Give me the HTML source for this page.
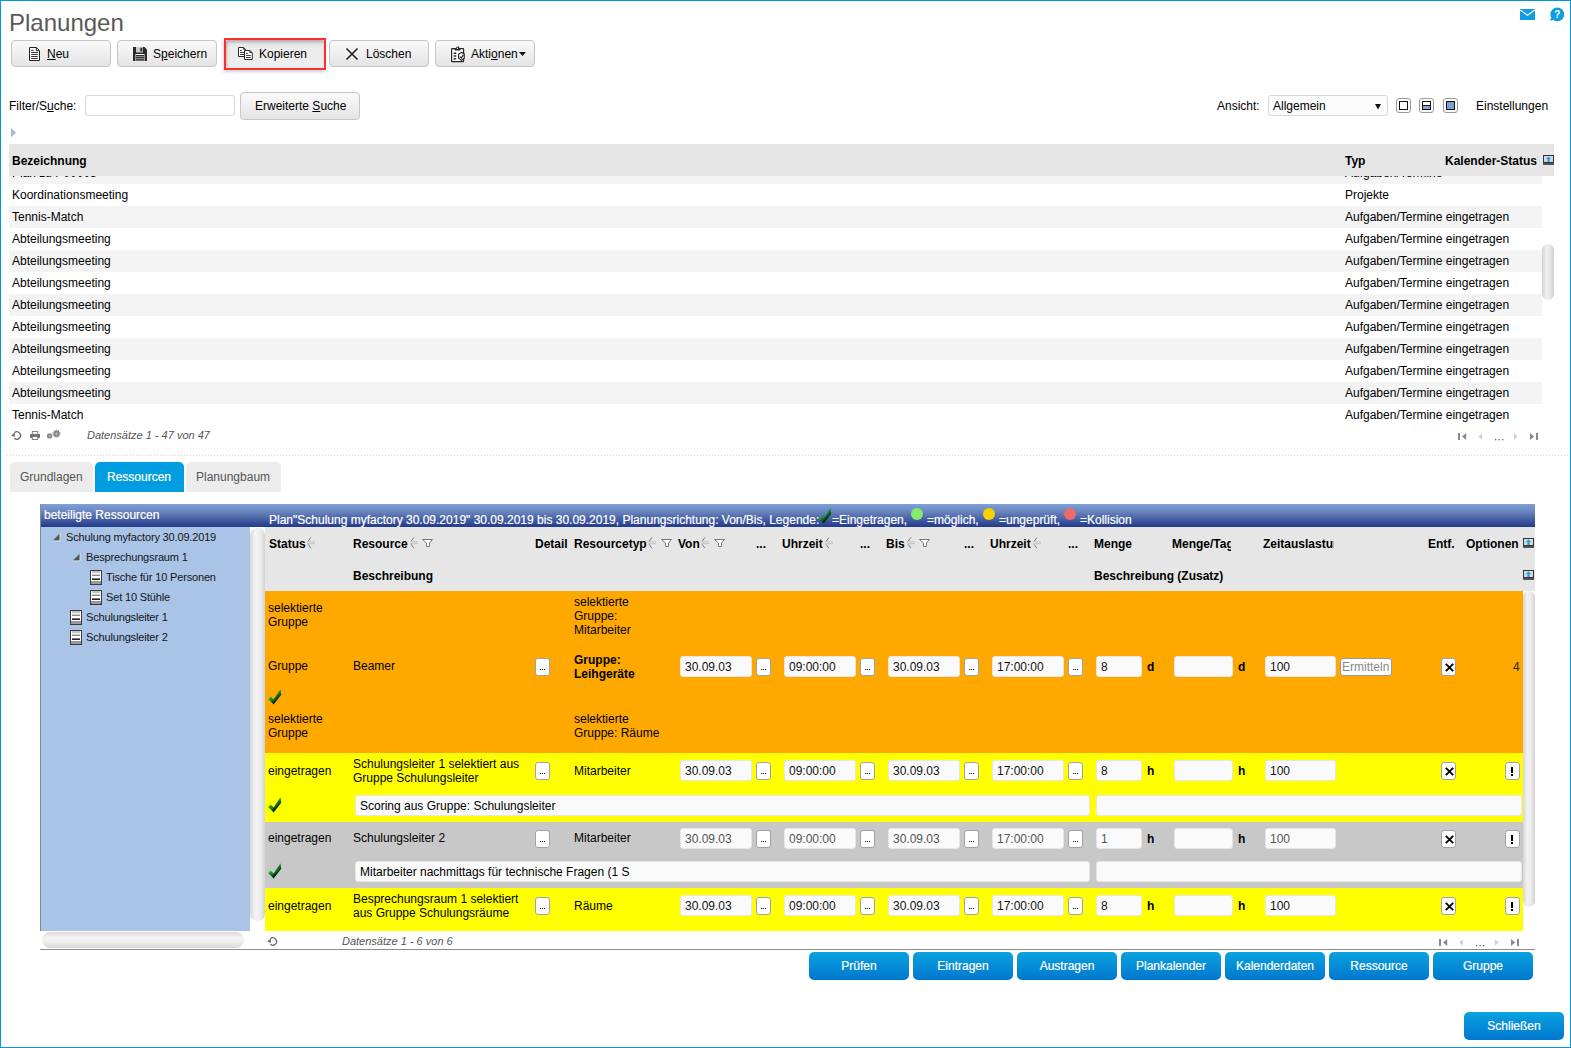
<!DOCTYPE html><html><head><meta charset="utf-8"><title>Planungen</title><style>
*{margin:0;padding:0;box-sizing:border-box}
html,body{width:1571px;height:1048px;overflow:hidden;background:#fff}
body{font-family:"Liberation Sans",sans-serif;color:#000;position:relative}
.t{position:absolute;white-space:nowrap}
.r{position:absolute}
.btn{border:1px solid #c6c6c6;border-radius:4px;background:linear-gradient(#fafafa,#e4e4e4)}
.inp{background:#fafafa;border:1px solid #e6e6e6;border-radius:3px}
.sbtn{background:#fff;border:1px solid #9ea3ab;border-radius:3px}
.bbtn{border-radius:5px;background:linear-gradient(#0aa2de,#0077d0)}
.w{-webkit-text-stroke:0.2px #fff}
.u{text-decoration:underline;text-decoration-thickness:1px;text-underline-offset:1px}
svg{position:absolute;overflow:visible}
</style></head><body><div class="r " style="left:0px;top:0px;width:1571px;height:1048px;border:1px solid #0398de"></div><div class="t " style="left:9px;top:9.98px;font-size:24px;line-height:26px;color:#595959;">Planungen</div><svg style="left:1520px;top:9px" width="15" height="11" viewBox="0 0 15 11"><rect x="0" y="0" width="15" height="11" fill="#0d9de0"/><path d="M0.3 1 L7.5 6.3 L14.7 1" stroke="#fff" stroke-width="1.1" fill="none"/></svg><svg style="left:1548px;top:7px" width="18" height="16" viewBox="0 0 18 16"><circle cx="9.3" cy="7.4" r="6.9" fill="#0d9de0"/><path d="M1.5 13.8 L4.5 9.5 L7 12.5 Z" fill="#0d9de0"/><text x="9.3" y="11.3" font-family="Liberation Sans" font-weight="bold" font-size="10" fill="#fff" text-anchor="middle">?</text></svg><div class="r btn" style="left:11px;top:40px;width:100px;height:27px;"></div><svg style="left:29px;top:47px" width="11" height="14" viewBox="0 0 11 14"><path d="M0.5 0.5H7.3L10.5 3.7V13.5H0.5Z" fill="#fff" stroke="#222" stroke-width="1"/><path d="M7.3 0.5V3.7H10.5" fill="none" stroke="#222" stroke-width="1"/><path d="M2.2 3.4H4.8M2.2 5.5H8.8M2.2 7.5H8.8M2.2 9.5H8.8M2.2 11.5H8.8" stroke="#222" stroke-width="0.9"/></svg><div class="t " style="left:47px;top:46.84px;font-size:12px;line-height:14px;"><span class="u">N</span>eu</div><div class="r btn" style="left:117px;top:40px;width:100px;height:27px;"></div><svg style="left:133px;top:47px" width="14" height="14" viewBox="0 0 14 14"><path d="M0 0H11.5L14 2.5V14H0Z" fill="#2a2a2a"/><rect x="3" y="0" width="7" height="5.5" fill="#cacaca"/><rect x="7.3" y="0.8" width="2" height="3.6" fill="#2a2a2a"/><rect x="2.5" y="7" width="9" height="7" fill="#fff"/><rect x="3" y="8" width="8" height="6" fill="#9a9a9a"/><path d="M3 8.6H11M3 10.7H11M3 12.9H11" stroke="#222" stroke-width="1"/></svg><div class="t " style="left:153px;top:46.84px;font-size:12px;line-height:14px;">S<span class="u">p</span>eichern</div><div class="r " style="left:224px;top:38px;width:102px;height:32px;border:2px solid #fb2f2f;box-shadow:-1px 2px 3px rgba(0,0,0,0.18)"></div><div class="r " style="left:226px;top:40px;width:98px;height:28px;background:linear-gradient(#dedede,#ececec 30%,#eeeeee);box-shadow:inset 1px 2px 3px rgba(0,0,0,0.22);border-radius:2px"></div><svg style="left:237px;top:46px" width="16" height="14" viewBox="0 0 16 14"><path d="M1.5 1.5H6.6L8.3 3.2V10.5H1.5Z" fill="#fff" stroke="#2a2a2a" stroke-width="1"/><path d="M6.6 1.5V3.3H8.3" fill="none" stroke="#2a2a2a"/><path d="M3 4.4H4.9M3 6.5H7.5M3 8.5H7.5" stroke="#2a2a2a" stroke-width="0.9"/><path d="M7.5 4.5H12.9L15.3 6.9V13.5H7.5Z" fill="#fff" stroke="#2a2a2a" stroke-width="1"/><path d="M12.9 4.5V6.5H15.3" fill="none" stroke="#2a2a2a"/><path d="M9 7.4H10.9M9 9.5H13.8M9 11.5H13.8" stroke="#2a2a2a" stroke-width="0.9"/></svg><div class="t " style="left:259px;top:46.84px;font-size:12px;line-height:14px;">Kopieren</div><div class="r btn" style="left:329px;top:40px;width:100px;height:27px;"></div><svg style="left:345px;top:47px" width="14" height="14" viewBox="0 0 14 14"><path d="M1.5 1.5L12.5 12.5M12.5 1.5L1.5 12.5" stroke="#222" stroke-width="1.6"/></svg><div class="t " style="left:366px;top:46.84px;font-size:12px;line-height:14px;">Löschen</div><div class="r btn" style="left:435px;top:40px;width:100px;height:27px;"></div><svg style="left:450px;top:45px" width="15" height="17" viewBox="0 0 15 17"><rect x="1.6" y="3.6" width="12" height="13" rx="0.6" fill="#fff" stroke="#262626" stroke-width="1.2"/><path d="M4.6 5.6H10.4V4H9.2V1.4H7.2L5.8 3V4H4.6Z" fill="#262626"/><rect x="6.8" y="2.6" width="1.3" height="1.2" fill="#fff"/><path d="M3.6 8.2H6.2M3.6 11H6.2M3.6 13.8H6.2" stroke="#262626" stroke-width="1.5"/><path d="M8.6 9.2L11.6 7.4L14.2 8.8V13.2L11.6 15.4L8.6 13.3Z" fill="#fff" stroke="#262626" stroke-width="1.1"/><path d="M9.9 11.6L11.3 13L13.4 9.6" fill="none" stroke="#262626" stroke-width="1.2"/></svg><div class="t " style="left:471px;top:46.84px;font-size:12px;line-height:14px;">Akti<span class="u">o</span>nen</div><svg style="left:519px;top:52px" width="8" height="5" viewBox="0 0 8 5"><path d="M0 0H7L3.5 4Z" fill="#111"/></svg><div class="t " style="left:9px;top:98.84px;font-size:12px;line-height:14px;">Filter/S<span class="u">u</span>che:</div><div class="r " style="left:85px;top:95px;width:150px;height:21px;background:#fff;border:1px solid #d9d9d9;border-radius:3px"></div><div class="r btn" style="left:240px;top:92px;width:120px;height:28px;"></div><div class="t " style="left:255px;top:98.84px;font-size:12px;line-height:14px;">Erweiterte <span class="u">S</span>uche</div><div class="t " style="left:1217px;top:98.84px;font-size:12px;line-height:14px;">Ansicht:</div><div class="r " style="left:1268px;top:95px;width:120px;height:21px;background:#fcfcfc;border:1px solid #d6d6d6;border-radius:3px"></div><div class="t " style="left:1273px;top:98.84px;font-size:12px;line-height:14px;">Allgemein</div><svg style="left:1375px;top:104px" width="7" height="6" viewBox="0 0 7 6"><path d="M0 0H6L3 5.5Z" fill="#111"/></svg><div class="r" style="left:1396px;top:98px;width:15px;height:15px;border:1px solid #9a9a9a;border-radius:3px;background:#fff"></div><div class="r " style="left:1399px;top:101px;width:9px;height:9px;border:1px solid #111;background:#fff"></div><div class="r" style="left:1419px;top:98px;width:15px;height:15px;border:1px solid #9a9a9a;border-radius:3px;background:#fff"></div><div class="r " style="left:1422px;top:101px;width:9px;height:9px;border:1px solid #111;background:linear-gradient(#fff 0,#fff 3px,#111 3px,#111 4px,#8aa3d6 4px)"></div><div class="r" style="left:1443px;top:98px;width:15px;height:15px;border:1px solid #9a9a9a;border-radius:3px;background:#fff"></div><div class="r " style="left:1446px;top:101px;width:9px;height:9px;border:1px solid #111;background:#7b9dd6"></div><div class="t " style="left:1476px;top:98.84px;font-size:12px;line-height:14px;">Einstellungen</div><svg style="left:11px;top:128px" width="6" height="10" viewBox="0 0 6 10"><path d="M0 0L5 4.8L0 9.6Z" fill="#a8bccb"/></svg><div class="r " style="left:9px;top:144px;width:1545px;height:32px;background:#e6e6e6"></div><div class="t " style="left:12px;top:153.84px;font-size:12px;line-height:14px;font-weight:bold;">Bezeichnung</div><div class="t " style="left:1345px;top:153.84px;font-size:12px;line-height:14px;font-weight:bold;">Typ</div><div class="t " style="left:1445px;top:153.84px;font-size:12px;line-height:14px;font-weight:bold;">Kalender-Status</div><svg style="left:1543px;top:155px" width="11" height="10" viewBox="0 0 11 10"><rect x="0" y="0" width="11" height="9" fill="#333"/><rect x="1" y="1" width="9" height="6" fill="#cfd8e0"/><path d="M5.5 1.5L8 4H6.5V7H4.5V4H3Z" fill="#1a9ae0"/><rect x="0" y="8" width="11" height="2" fill="#555"/></svg><div class="r" style="left:9px;top:176px;width:1533px;height:250px;overflow:hidden"><div class="r" style="left:0;top:-14px;width:1533px;height:22px;background:#f4f4f4"></div><div class="t " style="left:3px;top:-10.16px;font-size:12px;line-height:14px;">Plan zu P00003</div><div class="t " style="left:1336px;top:-10.16px;font-size:12px;line-height:14px;">Aufgaben/Termine</div><div class="t " style="left:3px;top:11.84px;font-size:12px;line-height:14px;">Koordinationsmeeting</div><div class="t " style="left:1336px;top:11.84px;font-size:12px;line-height:14px;">Projekte</div><div class="r" style="left:0;top:30px;width:1533px;height:22px;background:#f4f4f4"></div><div class="t " style="left:3px;top:33.84px;font-size:12px;line-height:14px;">Tennis-Match</div><div class="t " style="left:1336px;top:33.84px;font-size:12px;line-height:14px;">Aufgaben/Termine eingetragen</div><div class="t " style="left:3px;top:55.84px;font-size:12px;line-height:14px;">Abteilungsmeeting</div><div class="t " style="left:1336px;top:55.84px;font-size:12px;line-height:14px;">Aufgaben/Termine eingetragen</div><div class="r" style="left:0;top:74px;width:1533px;height:22px;background:#f4f4f4"></div><div class="t " style="left:3px;top:77.84px;font-size:12px;line-height:14px;">Abteilungsmeeting</div><div class="t " style="left:1336px;top:77.84px;font-size:12px;line-height:14px;">Aufgaben/Termine eingetragen</div><div class="t " style="left:3px;top:99.84px;font-size:12px;line-height:14px;">Abteilungsmeeting</div><div class="t " style="left:1336px;top:99.84px;font-size:12px;line-height:14px;">Aufgaben/Termine eingetragen</div><div class="r" style="left:0;top:118px;width:1533px;height:22px;background:#f4f4f4"></div><div class="t " style="left:3px;top:121.84px;font-size:12px;line-height:14px;">Abteilungsmeeting</div><div class="t " style="left:1336px;top:121.84px;font-size:12px;line-height:14px;">Aufgaben/Termine eingetragen</div><div class="t " style="left:3px;top:143.84px;font-size:12px;line-height:14px;">Abteilungsmeeting</div><div class="t " style="left:1336px;top:143.84px;font-size:12px;line-height:14px;">Aufgaben/Termine eingetragen</div><div class="r" style="left:0;top:162px;width:1533px;height:22px;background:#f4f4f4"></div><div class="t " style="left:3px;top:165.84px;font-size:12px;line-height:14px;">Abteilungsmeeting</div><div class="t " style="left:1336px;top:165.84px;font-size:12px;line-height:14px;">Aufgaben/Termine eingetragen</div><div class="t " style="left:3px;top:187.84px;font-size:12px;line-height:14px;">Abteilungsmeeting</div><div class="t " style="left:1336px;top:187.84px;font-size:12px;line-height:14px;">Aufgaben/Termine eingetragen</div><div class="r" style="left:0;top:206px;width:1533px;height:22px;background:#f4f4f4"></div><div class="t " style="left:3px;top:209.84px;font-size:12px;line-height:14px;">Abteilungsmeeting</div><div class="t " style="left:1336px;top:209.84px;font-size:12px;line-height:14px;">Aufgaben/Termine eingetragen</div><div class="t " style="left:3px;top:231.84px;font-size:12px;line-height:14px;">Tennis-Match</div><div class="t " style="left:1336px;top:231.84px;font-size:12px;line-height:14px;">Aufgaben/Termine eingetragen</div></div><div class="r " style="left:1542px;top:244px;width:12px;height:56px;border-radius:6px;background:linear-gradient(90deg,#d2d2d2,#efefef 35%,#e9e9e9 65%,#cfcfcf)"></div><svg style="left:10px;top:430px" width="12" height="11" viewBox="0 0 12 11"><path d="M4.4 8.3A3.7 3.7 0 1 0 4.4 2.7" stroke="#6a6a6a" stroke-width="1.3" fill="none"/><path d="M1.2 5.4L4.8 2.4V7Z" fill="#6a6a6a"/></svg><svg style="left:30px;top:431px" width="10" height="9" viewBox="0 0 10 9"><rect x="0" y="3" width="10" height="4" rx="0.8" fill="#6e6e6e"/><rect x="2.3" y="0.5" width="5.4" height="2.8" fill="#fff" stroke="#7a7a7a" stroke-width="0.9"/><rect x="2.3" y="5.6" width="5.4" height="2.9" fill="#fff" stroke="#7a7a7a" stroke-width="0.9"/></svg><svg style="left:46px;top:429px" width="15" height="11" viewBox="0 0 15 11"><circle cx="3.6" cy="6.9" r="2.7" fill="#8a8a8a"/><circle cx="3.6" cy="6.9" r="1" fill="#b0b0b0"/><circle cx="10.5" cy="4.7" r="3.1" fill="#858585"/><circle cx="10.5" cy="4.7" r="3.5" fill="none" stroke="#858585" stroke-width="1.1" stroke-dasharray="1 1.2"/><circle cx="10.5" cy="4.7" r="1.2" fill="#b8b8b8"/></svg><div class="t " style="left:87px;top:428.89px;font-size:11px;line-height:13px;font-style:italic;color:#555;">Datensätze 1 - 47 von 47</div><svg style="left:1458px;top:433px" width="82" height="8" viewBox="0 0 82 8"><rect x="0" y="0" width="2" height="7" fill="#8a8a8a"/><path d="M8.2 0V7L4 3.5Z" fill="#8a8a8a"/><path d="M24 0.3V6.7L20.4 3.5Z" fill="#d0d0d0"/><rect x="37" y="6" width="1.3" height="1.3" fill="#666"/><rect x="40.5" y="6" width="1.3" height="1.3" fill="#666"/><rect x="44" y="6" width="1.3" height="1.3" fill="#666"/><path d="M56 0.3V6.7L59.6 3.5Z" fill="#d0d0d0"/><path d="M72 0V7L76.2 3.5Z" fill="#8a8a8a"/><rect x="78" y="0" width="2" height="7" fill="#8a8a8a"/></svg><div class="r " style="left:7px;top:455px;width:1562px;height:1px;background:repeating-linear-gradient(90deg,#d2d2d2 0,#d2d2d2 1px,transparent 1px,transparent 3px)"></div><div class="r " style="left:10px;top:462px;width:83px;height:30px;background:#ececec;border-radius:5px 5px 0 0"></div><div class="t " style="left:20px;top:469.84px;font-size:12px;line-height:14px;color:#555;">Grundlagen</div><div class="r " style="left:95px;top:462px;width:89px;height:30px;background:#009ee0;border-radius:5px 5px 0 0"></div><div class="t w" style="left:107px;top:469.84px;font-size:12px;line-height:14px;color:#fff;">Ressourcen</div><div class="r " style="left:186px;top:462px;width:95px;height:30px;background:#ececec;border-radius:5px 5px 0 0"></div><div class="t " style="left:196px;top:469.84px;font-size:12px;line-height:14px;color:#555;">Planungbaum</div><div class="r " style="left:40px;top:504px;width:1495px;height:23px;background:linear-gradient(#7ea1d8,#6d88c2 30%,#4c64a6 62%,#2a4290 92%,#233b8a)"></div><div class="t w" style="left:44px;top:507.84px;font-size:12px;line-height:14px;color:#fff;">beteiligte Ressourcen</div><div class="t w" style="left:269px;top:513.14px;font-size:12px;line-height:14px;color:#fff;">Plan"Schulung myfactory 30.09.2019" 30.09.2019 bis 30.09.2019, Planungsrichtung: Von/Bis, Legende:</div><svg style="left:818px;top:508px" width="14" height="16" viewBox="0 0 14 16"><defs><linearGradient id="cg818_508" x1="0.25" y1="0.2" x2="0.75" y2="0.8"><stop offset="0" stop-color="#a8eea0"/><stop offset="0.3" stop-color="#22a52e"/><stop offset="0.62" stop-color="#0b6a18"/><stop offset="0.85" stop-color="#021a05"/><stop offset="1" stop-color="#000"/></linearGradient></defs><path d="M0.1 9.9L2.6 7.4L5.6 10.6L12.5 0.3L13.2 5.8L5.6 15.6Z" fill="url(#cg818_508)"/></svg><div class="t w" style="left:832px;top:513.14px;font-size:12px;line-height:14px;color:#fff;">=Eingetragen,</div><svg style="left:911px;top:508px" width="12" height="12" viewBox="0 0 12 12"><circle cx="6" cy="6" r="6" fill="#84ec6c"/></svg><div class="t w" style="left:927px;top:513.14px;font-size:12px;line-height:14px;color:#fff;">=möglich,</div><svg style="left:983px;top:508px" width="12" height="12" viewBox="0 0 12 12"><circle cx="6" cy="6" r="6" fill="#f8d200"/></svg><div class="t w" style="left:999px;top:513.14px;font-size:12px;line-height:14px;color:#fff;">=ungeprüft,</div><svg style="left:1064px;top:508px" width="12" height="12" viewBox="0 0 12 12"><circle cx="6" cy="6" r="6" fill="#ec6a6a"/></svg><div class="t w" style="left:1080px;top:513.14px;font-size:12px;line-height:14px;color:#fff;">=Kollision</div><div class="r " style="left:40px;top:527px;width:210px;height:404px;background:#a9c4e6"></div><div class="r " style="left:40px;top:504px;width:1px;height:446px;background:#8a8a8a"></div><svg style="left:52px;top:533px" width="9" height="9" viewBox="0 0 9 9"><path d="M8.3 0.3V8.3H0.3Z" fill="#fff"/><path d="M7.6 0.8V7.6H0.8Z" fill="#555"/></svg><div class="t " style="left:66px;top:530.69px;font-size:11px;line-height:13px;color:#151515;letter-spacing:-0.16px">Schulung myfactory 30.09.2019</div><svg style="left:72px;top:553px" width="9" height="9" viewBox="0 0 9 9"><path d="M8.3 0.3V8.3H0.3Z" fill="#fff"/><path d="M7.6 0.8V7.6H0.8Z" fill="#555"/></svg><div class="t " style="left:86px;top:550.69px;font-size:11px;line-height:13px;color:#151515;letter-spacing:-0.16px">Besprechungsraum 1</div><svg style="left:90px;top:570px" width="12" height="15" viewBox="0 0 12 15"><rect x="0.5" y="0.5" width="11" height="14" fill="#fff" stroke="#3a3a3a"/><rect x="2" y="1" width="8" height="2.2" fill="#c4c4c4"/><path d="M2 5.3H10" stroke="#8c8c8c" stroke-width="1.5"/><path d="M2 9.2H10" stroke="#222" stroke-width="1.6"/><rect x="1" y="11" width="10" height="3" fill="#9a9a9a"/></svg><div class="t " style="left:106px;top:570.69px;font-size:11px;line-height:13px;color:#151515;letter-spacing:-0.16px">Tische für 10 Personen</div><svg style="left:90px;top:590px" width="12" height="15" viewBox="0 0 12 15"><rect x="0.5" y="0.5" width="11" height="14" fill="#fff" stroke="#3a3a3a"/><rect x="2" y="1" width="8" height="2.2" fill="#c4c4c4"/><path d="M2 5.3H10" stroke="#8c8c8c" stroke-width="1.5"/><path d="M2 9.2H10" stroke="#222" stroke-width="1.6"/><rect x="1" y="11" width="10" height="3" fill="#9a9a9a"/></svg><div class="t " style="left:106px;top:590.69px;font-size:11px;line-height:13px;color:#151515;letter-spacing:-0.16px">Set 10 Stühle</div><svg style="left:70px;top:610px" width="12" height="15" viewBox="0 0 12 15"><rect x="0.5" y="0.5" width="11" height="14" fill="#fff" stroke="#3a3a3a"/><rect x="2" y="1" width="8" height="2.2" fill="#c4c4c4"/><path d="M2 5.3H10" stroke="#8c8c8c" stroke-width="1.5"/><path d="M2 9.2H10" stroke="#222" stroke-width="1.6"/><rect x="1" y="11" width="10" height="3" fill="#9a9a9a"/></svg><div class="t " style="left:86px;top:610.69px;font-size:11px;line-height:13px;color:#151515;letter-spacing:-0.16px">Schulungsleiter 1</div><svg style="left:70px;top:630px" width="12" height="15" viewBox="0 0 12 15"><rect x="0.5" y="0.5" width="11" height="14" fill="#fff" stroke="#3a3a3a"/><rect x="2" y="1" width="8" height="2.2" fill="#c4c4c4"/><path d="M2 5.3H10" stroke="#8c8c8c" stroke-width="1.5"/><path d="M2 9.2H10" stroke="#222" stroke-width="1.6"/><rect x="1" y="11" width="10" height="3" fill="#9a9a9a"/></svg><div class="t " style="left:86px;top:630.69px;font-size:11px;line-height:13px;color:#151515;letter-spacing:-0.16px">Schulungsleiter 2</div><div class="r " style="left:40px;top:931px;width:210px;height:18px;background:#fff"></div><div class="r " style="left:42px;top:932px;width:202px;height:16px;border-radius:8px;background:linear-gradient(#dadada,#f4f4f4 35%,#eeeeee 65%,#d6d6d6)"></div><div class="r " style="left:250px;top:527px;width:15px;height:422px;background:#fff"></div><div class="r " style="left:250px;top:528px;width:15px;height:393px;border-radius:7px;background:linear-gradient(90deg,#d8d8d8,#f4f4f4 35%,#eeeeee 65%,#d4d4d4)"></div><div class="r " style="left:265px;top:527px;width:1270px;height:64px;background:#e6e6e6"></div><div class="t " style="left:269px;top:536.84px;font-size:12px;line-height:14px;font-weight:bold;">Status</div><svg style="left:307px;top:537px" width="9" height="12" viewBox="0 0 9 12"><path d="M3.9 0.4L1.1 4.4" stroke="#7a7a7a" stroke-width="1"/><path d="M0 4.9H8M0 6.7H8" stroke="#bdbdbd" stroke-width="0.9"/><path d="M1.1 7.3L3.9 11.2" stroke="#7a7a7a" stroke-width="1"/></svg><div class="t " style="left:353px;top:536.84px;font-size:12px;line-height:14px;font-weight:bold;">Resource</div><svg style="left:410px;top:537px" width="9" height="12" viewBox="0 0 9 12"><path d="M3.9 0.4L1.1 4.4" stroke="#7a7a7a" stroke-width="1"/><path d="M0 4.9H8M0 6.7H8" stroke="#bdbdbd" stroke-width="0.9"/><path d="M1.1 7.3L3.9 11.2" stroke="#7a7a7a" stroke-width="1"/></svg><svg style="left:422px;top:539px" width="12" height="9" viewBox="0 0 12 9"><path d="M0.5 0.5H10.5L7.5 4V7.5H4.5V4Z" fill="#fff" stroke="#787878" stroke-width="1"/></svg><div class="t " style="left:535px;top:536.84px;font-size:12px;line-height:14px;font-weight:bold;">Detail</div><div class="t " style="left:574px;top:536.84px;font-size:12px;line-height:14px;font-weight:bold;">Resourcetyp</div><svg style="left:648px;top:537px" width="9" height="12" viewBox="0 0 9 12"><path d="M3.9 0.4L1.1 4.4" stroke="#7a7a7a" stroke-width="1"/><path d="M0 4.9H8M0 6.7H8" stroke="#bdbdbd" stroke-width="0.9"/><path d="M1.1 7.3L3.9 11.2" stroke="#7a7a7a" stroke-width="1"/></svg><svg style="left:661px;top:539px" width="12" height="9" viewBox="0 0 12 9"><path d="M0.5 0.5H10.5L7.5 4V7.5H4.5V4Z" fill="#fff" stroke="#787878" stroke-width="1"/></svg><div class="t " style="left:678px;top:536.84px;font-size:12px;line-height:14px;font-weight:bold;">Von</div><svg style="left:701px;top:537px" width="9" height="12" viewBox="0 0 9 12"><path d="M3.9 0.4L1.1 4.4" stroke="#7a7a7a" stroke-width="1"/><path d="M0 4.9H8M0 6.7H8" stroke="#bdbdbd" stroke-width="0.9"/><path d="M1.1 7.3L3.9 11.2" stroke="#7a7a7a" stroke-width="1"/></svg><svg style="left:714px;top:539px" width="12" height="9" viewBox="0 0 12 9"><path d="M0.5 0.5H10.5L7.5 4V7.5H4.5V4Z" fill="#fff" stroke="#787878" stroke-width="1"/></svg><div class="t " style="left:756px;top:536.84px;font-size:12px;line-height:14px;font-weight:bold;">...</div><div class="t " style="left:782px;top:536.84px;font-size:12px;line-height:14px;font-weight:bold;">Uhrzeit</div><svg style="left:825px;top:537px" width="9" height="12" viewBox="0 0 9 12"><path d="M3.9 0.4L1.1 4.4" stroke="#7a7a7a" stroke-width="1"/><path d="M0 4.9H8M0 6.7H8" stroke="#bdbdbd" stroke-width="0.9"/><path d="M1.1 7.3L3.9 11.2" stroke="#7a7a7a" stroke-width="1"/></svg><div class="t " style="left:860px;top:536.84px;font-size:12px;line-height:14px;font-weight:bold;">...</div><div class="t " style="left:886px;top:536.84px;font-size:12px;line-height:14px;font-weight:bold;">Bis</div><svg style="left:907px;top:537px" width="9" height="12" viewBox="0 0 9 12"><path d="M3.9 0.4L1.1 4.4" stroke="#7a7a7a" stroke-width="1"/><path d="M0 4.9H8M0 6.7H8" stroke="#bdbdbd" stroke-width="0.9"/><path d="M1.1 7.3L3.9 11.2" stroke="#7a7a7a" stroke-width="1"/></svg><svg style="left:919px;top:539px" width="12" height="9" viewBox="0 0 12 9"><path d="M0.5 0.5H10.5L7.5 4V7.5H4.5V4Z" fill="#fff" stroke="#787878" stroke-width="1"/></svg><div class="t " style="left:964px;top:536.84px;font-size:12px;line-height:14px;font-weight:bold;">...</div><div class="t " style="left:990px;top:536.84px;font-size:12px;line-height:14px;font-weight:bold;">Uhrzeit</div><svg style="left:1033px;top:537px" width="9" height="12" viewBox="0 0 9 12"><path d="M3.9 0.4L1.1 4.4" stroke="#7a7a7a" stroke-width="1"/><path d="M0 4.9H8M0 6.7H8" stroke="#bdbdbd" stroke-width="0.9"/><path d="M1.1 7.3L3.9 11.2" stroke="#7a7a7a" stroke-width="1"/></svg><div class="t " style="left:1068px;top:536.84px;font-size:12px;line-height:14px;font-weight:bold;">...</div><div class="t " style="left:1094px;top:536.84px;font-size:12px;line-height:14px;font-weight:bold;">Menge</div><div class="r" style="left:1172px;top:530px;width:59px;height:24px;overflow:hidden"><div class="t " style="left:0px;top:6.84px;font-size:12px;line-height:14px;font-weight:bold;">Menge/Tag</div></div><div class="r" style="left:1263px;top:530px;width:71px;height:24px;overflow:hidden"><div class="t " style="left:0px;top:6.84px;font-size:12px;line-height:14px;font-weight:bold;">Zeitauslastung</div></div><div class="t " style="left:1428px;top:536.84px;font-size:12px;line-height:14px;font-weight:bold;">Entf.</div><div class="t " style="left:1466px;top:536.84px;font-size:12px;line-height:14px;font-weight:bold;">Optionen</div><svg style="left:1523px;top:538px" width="11" height="10" viewBox="0 0 11 10"><rect x="0" y="0" width="11" height="9" fill="#333"/><rect x="1" y="1" width="9" height="6" fill="#cfd8e0"/><path d="M5.5 1.5L8 4H6.5V7H4.5V4H3Z" fill="#1a9ae0"/><rect x="0" y="8" width="11" height="2" fill="#555"/></svg><div class="t " style="left:353px;top:568.84px;font-size:12px;line-height:14px;font-weight:bold;">Beschreibung</div><div class="t " style="left:1094px;top:568.84px;font-size:12px;line-height:14px;font-weight:bold;">Beschreibung (Zusatz)</div><svg style="left:1523px;top:570px" width="11" height="10" viewBox="0 0 11 10"><rect x="0" y="0" width="11" height="9" fill="#333"/><rect x="1" y="1" width="9" height="6" fill="#cfd8e0"/><path d="M5.5 1.5L8 4H6.5V7H4.5V4H3Z" fill="#1a9ae0"/><rect x="0" y="8" width="11" height="2" fill="#555"/></svg><div class="r " style="left:265px;top:591px;width:1258px;height:162px;background:#ffa900"></div><div class="r " style="left:265px;top:753px;width:1258px;height:69px;background:#ffff00"></div><div class="r " style="left:265px;top:822px;width:1258px;height:66px;background:#c8c8c8"></div><div class="r " style="left:265px;top:888px;width:1258px;height:43px;background:#ffff00"></div><div class="r " style="left:1523px;top:591px;width:12px;height:339px;background:#fff"></div><div class="r " style="left:1523px;top:591px;width:12px;height:316px;border-radius:6px;background:linear-gradient(90deg,#d6d6d6,#f2f2f2 35%,#ececec 65%,#d2d2d2)"></div><div class="t " style="left:268px;top:601.34px;font-size:12px;line-height:14px;">selektierte</div><div class="t " style="left:268px;top:615.34px;font-size:12px;line-height:14px;">Gruppe</div><div class="t " style="left:574px;top:594.84px;font-size:12px;line-height:14px;">selektierte</div><div class="t " style="left:574px;top:608.84px;font-size:12px;line-height:14px;">Gruppe:</div><div class="t " style="left:574px;top:622.84px;font-size:12px;line-height:14px;">Mitarbeiter</div><div class="t " style="left:268px;top:659.34px;font-size:12px;line-height:14px;">Gruppe</div><div class="t " style="left:353px;top:659.34px;font-size:12px;line-height:14px;">Beamer</div><div class="r sbtn" style="left:535px;top:658px;width:15px;height:18px;"><div style="position:absolute;left:4px;top:10px;width:1.3px;height:1.3px;background:#111;box-shadow:2px 0 #111,4px 0 #111"></div></div><div class="t " style="left:574px;top:653.04px;font-size:12px;line-height:14px;font-weight:bold;">Gruppe:</div><div class="t " style="left:574px;top:667.04px;font-size:12px;line-height:14px;font-weight:bold;">Leihgeräte</div><div class="r inp" style="left:680px;top:656px;width:72px;height:21px;"></div><div class="t " style="left:685px;top:659.64px;font-size:12px;line-height:14px;color:#111;">30.09.03</div><div class="r sbtn" style="left:756px;top:658px;width:15px;height:18px;"><div style="position:absolute;left:4px;top:10px;width:1.3px;height:1.3px;background:#111;box-shadow:2px 0 #111,4px 0 #111"></div></div><div class="r inp" style="left:784px;top:656px;width:72px;height:21px;"></div><div class="t " style="left:789px;top:659.64px;font-size:12px;line-height:14px;color:#111;">09:00:00</div><div class="r sbtn" style="left:860px;top:658px;width:15px;height:18px;"><div style="position:absolute;left:4px;top:10px;width:1.3px;height:1.3px;background:#111;box-shadow:2px 0 #111,4px 0 #111"></div></div><div class="r inp" style="left:888px;top:656px;width:72px;height:21px;"></div><div class="t " style="left:893px;top:659.64px;font-size:12px;line-height:14px;color:#111;">30.09.03</div><div class="r sbtn" style="left:964px;top:658px;width:15px;height:18px;"><div style="position:absolute;left:4px;top:10px;width:1.3px;height:1.3px;background:#111;box-shadow:2px 0 #111,4px 0 #111"></div></div><div class="r inp" style="left:992px;top:656px;width:72px;height:21px;"></div><div class="t " style="left:997px;top:659.64px;font-size:12px;line-height:14px;color:#111;">17:00:00</div><div class="r sbtn" style="left:1068px;top:658px;width:15px;height:18px;"><div style="position:absolute;left:4px;top:10px;width:1.3px;height:1.3px;background:#111;box-shadow:2px 0 #111,4px 0 #111"></div></div><div class="r inp" style="left:1096px;top:656px;width:46px;height:21px;"></div><div class="t " style="left:1101px;top:659.64px;font-size:12px;line-height:14px;color:#111;">8</div><div class="t " style="left:1147px;top:659.84px;font-size:12px;line-height:14px;font-weight:bold;">d</div><div class="r inp" style="left:1174px;top:656px;width:59px;height:21px;"></div><div class="t " style="left:1238px;top:659.84px;font-size:12px;line-height:14px;font-weight:bold;">d</div><div class="r inp" style="left:1265px;top:656px;width:71px;height:21px;"></div><div class="t " style="left:1270px;top:659.64px;font-size:12px;line-height:14px;color:#111;">100</div><div class="r " style="left:1340px;top:658px;width:52px;height:18px;background:#fff;border:1px solid #999;border-radius:3px"></div><div class="t " style="left:1342px;top:659.84px;font-size:12px;line-height:14px;color:#8a8a8a;">Ermitteln</div><div class="r sbtn" style="left:1441px;top:658px;width:15px;height:18px;"><svg style="left:3px;top:4px" width="9" height="9" viewBox="0 0 9 9"><path d="M0.8 0.8L8.2 8.2M8.2 0.8L0.8 8.2" stroke="#000" stroke-width="1.9"/></svg></div><div class="t " style="left:1513px;top:659.84px;font-size:12px;line-height:14px;color:#1a2a10;">4</div><svg style="left:268px;top:689px" width="14" height="16" viewBox="0 0 14 16"><defs><linearGradient id="cg268_689" x1="0.25" y1="0.2" x2="0.75" y2="0.8"><stop offset="0" stop-color="#a8eea0"/><stop offset="0.3" stop-color="#22a52e"/><stop offset="0.62" stop-color="#0b6a18"/><stop offset="0.85" stop-color="#021a05"/><stop offset="1" stop-color="#000"/></linearGradient></defs><path d="M0.1 9.9L2.6 7.4L5.6 10.6L12.5 0.3L13.2 5.8L5.6 15.6Z" fill="url(#cg268_689)"/></svg><div class="t " style="left:268px;top:712.24px;font-size:12px;line-height:14px;">selektierte</div><div class="t " style="left:268px;top:726.24px;font-size:12px;line-height:14px;">Gruppe</div><div class="t " style="left:574px;top:712.24px;font-size:12px;line-height:14px;">selektierte</div><div class="t " style="left:574px;top:726.24px;font-size:12px;line-height:14px;">Gruppe: Räume</div><div class="t " style="left:268px;top:763.84px;font-size:12px;line-height:14px;">eingetragen</div><div class="t " style="left:353px;top:756.84px;font-size:12px;line-height:14px;">Schulungsleiter 1 selektiert aus</div><div class="t " style="left:353px;top:770.84px;font-size:12px;line-height:14px;">Gruppe Schulungsleiter</div><div class="r sbtn" style="left:535px;top:762px;width:15px;height:18px;"><div style="position:absolute;left:4px;top:10px;width:1.3px;height:1.3px;background:#111;box-shadow:2px 0 #111,4px 0 #111"></div></div><div class="t " style="left:574px;top:763.84px;font-size:12px;line-height:14px;">Mitarbeiter</div><div class="r inp" style="left:680px;top:760px;width:72px;height:21px;"></div><div class="t " style="left:685px;top:763.64px;font-size:12px;line-height:14px;color:#111;">30.09.03</div><div class="r sbtn" style="left:756px;top:762px;width:15px;height:18px;"><div style="position:absolute;left:4px;top:10px;width:1.3px;height:1.3px;background:#111;box-shadow:2px 0 #111,4px 0 #111"></div></div><div class="r inp" style="left:784px;top:760px;width:72px;height:21px;"></div><div class="t " style="left:789px;top:763.64px;font-size:12px;line-height:14px;color:#111;">09:00:00</div><div class="r sbtn" style="left:860px;top:762px;width:15px;height:18px;"><div style="position:absolute;left:4px;top:10px;width:1.3px;height:1.3px;background:#111;box-shadow:2px 0 #111,4px 0 #111"></div></div><div class="r inp" style="left:888px;top:760px;width:72px;height:21px;"></div><div class="t " style="left:893px;top:763.64px;font-size:12px;line-height:14px;color:#111;">30.09.03</div><div class="r sbtn" style="left:964px;top:762px;width:15px;height:18px;"><div style="position:absolute;left:4px;top:10px;width:1.3px;height:1.3px;background:#111;box-shadow:2px 0 #111,4px 0 #111"></div></div><div class="r inp" style="left:992px;top:760px;width:72px;height:21px;"></div><div class="t " style="left:997px;top:763.64px;font-size:12px;line-height:14px;color:#111;">17:00:00</div><div class="r sbtn" style="left:1068px;top:762px;width:15px;height:18px;"><div style="position:absolute;left:4px;top:10px;width:1.3px;height:1.3px;background:#111;box-shadow:2px 0 #111,4px 0 #111"></div></div><div class="r inp" style="left:1096px;top:760px;width:46px;height:21px;"></div><div class="t " style="left:1101px;top:763.64px;font-size:12px;line-height:14px;color:#111;">8</div><div class="t " style="left:1147px;top:763.84px;font-size:12px;line-height:14px;font-weight:bold;">h</div><div class="r inp" style="left:1174px;top:760px;width:59px;height:21px;"></div><div class="t " style="left:1238px;top:763.84px;font-size:12px;line-height:14px;font-weight:bold;">h</div><div class="r inp" style="left:1265px;top:760px;width:71px;height:21px;"></div><div class="t " style="left:1270px;top:763.64px;font-size:12px;line-height:14px;color:#111;">100</div><div class="r sbtn" style="left:1441px;top:762px;width:15px;height:18px;"><svg style="left:3px;top:4px" width="9" height="9" viewBox="0 0 9 9"><path d="M0.8 0.8L8.2 8.2M8.2 0.8L0.8 8.2" stroke="#000" stroke-width="1.9"/></svg></div><div class="r sbtn" style="left:1505px;top:762px;width:15px;height:18px;"><div style="position:absolute;left:5px;top:4px;width:2px;height:5.5px;background:#000"></div><div style="position:absolute;left:5px;top:10.5px;width:2px;height:2px;background:#000"></div></div><svg style="left:268px;top:797px" width="14" height="16" viewBox="0 0 14 16"><defs><linearGradient id="cg268_797" x1="0.25" y1="0.2" x2="0.75" y2="0.8"><stop offset="0" stop-color="#a8eea0"/><stop offset="0.3" stop-color="#22a52e"/><stop offset="0.62" stop-color="#0b6a18"/><stop offset="0.85" stop-color="#021a05"/><stop offset="1" stop-color="#000"/></linearGradient></defs><path d="M0.1 9.9L2.6 7.4L5.6 10.6L12.5 0.3L13.2 5.8L5.6 15.6Z" fill="url(#cg268_797)"/></svg><div class="r inp" style="left:355px;top:795px;width:735px;height:21px;"></div><div class="t " style="left:360px;top:798.84px;font-size:12px;line-height:14px;">Scoring aus Gruppe: Schulungsleiter</div><div class="r inp" style="left:1096px;top:795px;width:426px;height:21px;"></div><div class="t " style="left:268px;top:830.84px;font-size:12px;line-height:14px;">eingetragen</div><div class="t " style="left:353px;top:830.84px;font-size:12px;line-height:14px;">Schulungsleiter 2</div><div class="r sbtn" style="left:535px;top:830px;width:15px;height:18px;"><div style="position:absolute;left:4px;top:10px;width:1.3px;height:1.3px;background:#111;box-shadow:2px 0 #111,4px 0 #111"></div></div><div class="t " style="left:574px;top:830.84px;font-size:12px;line-height:14px;">Mitarbeiter</div><div class="r inp" style="left:680px;top:828px;width:72px;height:21px;"></div><div class="t " style="left:685px;top:831.64px;font-size:12px;line-height:14px;color:#555;">30.09.03</div><div class="r sbtn" style="left:756px;top:830px;width:15px;height:18px;"><div style="position:absolute;left:4px;top:10px;width:1.3px;height:1.3px;background:#111;box-shadow:2px 0 #111,4px 0 #111"></div></div><div class="r inp" style="left:784px;top:828px;width:72px;height:21px;"></div><div class="t " style="left:789px;top:831.64px;font-size:12px;line-height:14px;color:#555;">09:00:00</div><div class="r sbtn" style="left:860px;top:830px;width:15px;height:18px;"><div style="position:absolute;left:4px;top:10px;width:1.3px;height:1.3px;background:#111;box-shadow:2px 0 #111,4px 0 #111"></div></div><div class="r inp" style="left:888px;top:828px;width:72px;height:21px;"></div><div class="t " style="left:893px;top:831.64px;font-size:12px;line-height:14px;color:#555;">30.09.03</div><div class="r sbtn" style="left:964px;top:830px;width:15px;height:18px;"><div style="position:absolute;left:4px;top:10px;width:1.3px;height:1.3px;background:#111;box-shadow:2px 0 #111,4px 0 #111"></div></div><div class="r inp" style="left:992px;top:828px;width:72px;height:21px;"></div><div class="t " style="left:997px;top:831.64px;font-size:12px;line-height:14px;color:#555;">17:00:00</div><div class="r sbtn" style="left:1068px;top:830px;width:15px;height:18px;"><div style="position:absolute;left:4px;top:10px;width:1.3px;height:1.3px;background:#111;box-shadow:2px 0 #111,4px 0 #111"></div></div><div class="r inp" style="left:1096px;top:828px;width:46px;height:21px;"></div><div class="t " style="left:1101px;top:831.64px;font-size:12px;line-height:14px;color:#555;">1</div><div class="t " style="left:1147px;top:831.84px;font-size:12px;line-height:14px;font-weight:bold;">h</div><div class="r inp" style="left:1174px;top:828px;width:59px;height:21px;"></div><div class="t " style="left:1238px;top:831.84px;font-size:12px;line-height:14px;font-weight:bold;">h</div><div class="r inp" style="left:1265px;top:828px;width:71px;height:21px;"></div><div class="t " style="left:1270px;top:831.64px;font-size:12px;line-height:14px;color:#555;">100</div><div class="r sbtn" style="left:1441px;top:830px;width:15px;height:18px;"><svg style="left:3px;top:4px" width="9" height="9" viewBox="0 0 9 9"><path d="M0.8 0.8L8.2 8.2M8.2 0.8L0.8 8.2" stroke="#000" stroke-width="1.9"/></svg></div><div class="r sbtn" style="left:1505px;top:830px;width:15px;height:18px;"><div style="position:absolute;left:5px;top:4px;width:2px;height:5.5px;background:#000"></div><div style="position:absolute;left:5px;top:10.5px;width:2px;height:2px;background:#000"></div></div><svg style="left:268px;top:863px" width="14" height="16" viewBox="0 0 14 16"><defs><linearGradient id="cg268_863" x1="0.25" y1="0.2" x2="0.75" y2="0.8"><stop offset="0" stop-color="#a8eea0"/><stop offset="0.3" stop-color="#22a52e"/><stop offset="0.62" stop-color="#0b6a18"/><stop offset="0.85" stop-color="#021a05"/><stop offset="1" stop-color="#000"/></linearGradient></defs><path d="M0.1 9.9L2.6 7.4L5.6 10.6L12.5 0.3L13.2 5.8L5.6 15.6Z" fill="url(#cg268_863)"/></svg><div class="r inp" style="left:355px;top:861px;width:735px;height:21px;"></div><div class="t " style="left:360px;top:864.84px;font-size:12px;line-height:14px;">Mitarbeiter nachmittags für technische Fragen (1 S</div><div class="r inp" style="left:1096px;top:861px;width:426px;height:21px;"></div><div class="t " style="left:268px;top:898.84px;font-size:12px;line-height:14px;">eingetragen</div><div class="t " style="left:353px;top:891.84px;font-size:12px;line-height:14px;">Besprechungsraum 1 selektiert</div><div class="t " style="left:353px;top:905.84px;font-size:12px;line-height:14px;">aus Gruppe Schulungsräume</div><div class="r sbtn" style="left:535px;top:897px;width:15px;height:18px;"><div style="position:absolute;left:4px;top:10px;width:1.3px;height:1.3px;background:#111;box-shadow:2px 0 #111,4px 0 #111"></div></div><div class="t " style="left:574px;top:898.84px;font-size:12px;line-height:14px;">Räume</div><div class="r inp" style="left:680px;top:895px;width:72px;height:21px;"></div><div class="t " style="left:685px;top:898.64px;font-size:12px;line-height:14px;color:#111;">30.09.03</div><div class="r sbtn" style="left:756px;top:897px;width:15px;height:18px;"><div style="position:absolute;left:4px;top:10px;width:1.3px;height:1.3px;background:#111;box-shadow:2px 0 #111,4px 0 #111"></div></div><div class="r inp" style="left:784px;top:895px;width:72px;height:21px;"></div><div class="t " style="left:789px;top:898.64px;font-size:12px;line-height:14px;color:#111;">09:00:00</div><div class="r sbtn" style="left:860px;top:897px;width:15px;height:18px;"><div style="position:absolute;left:4px;top:10px;width:1.3px;height:1.3px;background:#111;box-shadow:2px 0 #111,4px 0 #111"></div></div><div class="r inp" style="left:888px;top:895px;width:72px;height:21px;"></div><div class="t " style="left:893px;top:898.64px;font-size:12px;line-height:14px;color:#111;">30.09.03</div><div class="r sbtn" style="left:964px;top:897px;width:15px;height:18px;"><div style="position:absolute;left:4px;top:10px;width:1.3px;height:1.3px;background:#111;box-shadow:2px 0 #111,4px 0 #111"></div></div><div class="r inp" style="left:992px;top:895px;width:72px;height:21px;"></div><div class="t " style="left:997px;top:898.64px;font-size:12px;line-height:14px;color:#111;">17:00:00</div><div class="r sbtn" style="left:1068px;top:897px;width:15px;height:18px;"><div style="position:absolute;left:4px;top:10px;width:1.3px;height:1.3px;background:#111;box-shadow:2px 0 #111,4px 0 #111"></div></div><div class="r inp" style="left:1096px;top:895px;width:46px;height:21px;"></div><div class="t " style="left:1101px;top:898.64px;font-size:12px;line-height:14px;color:#111;">8</div><div class="t " style="left:1147px;top:898.84px;font-size:12px;line-height:14px;font-weight:bold;">h</div><div class="r inp" style="left:1174px;top:895px;width:59px;height:21px;"></div><div class="t " style="left:1238px;top:898.84px;font-size:12px;line-height:14px;font-weight:bold;">h</div><div class="r inp" style="left:1265px;top:895px;width:71px;height:21px;"></div><div class="t " style="left:1270px;top:898.64px;font-size:12px;line-height:14px;color:#111;">100</div><div class="r sbtn" style="left:1441px;top:897px;width:15px;height:18px;"><svg style="left:3px;top:4px" width="9" height="9" viewBox="0 0 9 9"><path d="M0.8 0.8L8.2 8.2M8.2 0.8L0.8 8.2" stroke="#000" stroke-width="1.9"/></svg></div><div class="r sbtn" style="left:1505px;top:897px;width:15px;height:18px;"><div style="position:absolute;left:5px;top:4px;width:2px;height:5.5px;background:#000"></div><div style="position:absolute;left:5px;top:10.5px;width:2px;height:2px;background:#000"></div></div><div class="r " style="left:265px;top:931px;width:1270px;height:18px;background:#fff"></div><svg style="left:266px;top:936px" width="12" height="11" viewBox="0 0 12 11"><path d="M4.4 8.3A3.7 3.7 0 1 0 4.4 2.7" stroke="#6a6a6a" stroke-width="1.3" fill="none"/><path d="M1.2 5.4L4.8 2.4V7Z" fill="#6a6a6a"/></svg><div class="t " style="left:342px;top:934.69px;font-size:11px;line-height:13px;font-style:italic;color:#555;">Datensätze 1 - 6 von 6</div><svg style="left:1439px;top:939px" width="82" height="8" viewBox="0 0 82 8"><rect x="0" y="0" width="2" height="7" fill="#8a8a8a"/><path d="M8.2 0V7L4 3.5Z" fill="#8a8a8a"/><path d="M24 0.3V6.7L20.4 3.5Z" fill="#d0d0d0"/><rect x="37" y="6" width="1.3" height="1.3" fill="#666"/><rect x="40.5" y="6" width="1.3" height="1.3" fill="#666"/><rect x="44" y="6" width="1.3" height="1.3" fill="#666"/><path d="M56 0.3V6.7L59.6 3.5Z" fill="#d0d0d0"/><path d="M72 0V7L76.2 3.5Z" fill="#8a8a8a"/><rect x="78" y="0" width="2" height="7" fill="#8a8a8a"/></svg><div class="r " style="left:40px;top:949px;width:1495px;height:1px;background:#8c8c8c"></div><div class="r bbtn" style="left:809px;top:952px;width:100px;height:28px;"></div><div class="t w" style="left:809px;top:959px;width:100px;text-align:center;font-size:12px;line-height:14px;color:#fff">Prüfen</div><div class="r bbtn" style="left:913px;top:952px;width:100px;height:28px;"></div><div class="t w" style="left:913px;top:959px;width:100px;text-align:center;font-size:12px;line-height:14px;color:#fff">Eintragen</div><div class="r bbtn" style="left:1017px;top:952px;width:100px;height:28px;"></div><div class="t w" style="left:1017px;top:959px;width:100px;text-align:center;font-size:12px;line-height:14px;color:#fff">Austragen</div><div class="r bbtn" style="left:1121px;top:952px;width:100px;height:28px;"></div><div class="t w" style="left:1121px;top:959px;width:100px;text-align:center;font-size:12px;line-height:14px;color:#fff">Plankalender</div><div class="r bbtn" style="left:1225px;top:952px;width:100px;height:28px;"></div><div class="t w" style="left:1225px;top:959px;width:100px;text-align:center;font-size:12px;line-height:14px;color:#fff">Kalenderdaten</div><div class="r bbtn" style="left:1329px;top:952px;width:100px;height:28px;"></div><div class="t w" style="left:1329px;top:959px;width:100px;text-align:center;font-size:12px;line-height:14px;color:#fff">Ressource</div><div class="r bbtn" style="left:1433px;top:952px;width:100px;height:28px;"></div><div class="t w" style="left:1433px;top:959px;width:100px;text-align:center;font-size:12px;line-height:14px;color:#fff">Gruppe</div><div class="r bbtn" style="left:1464px;top:1012px;width:100px;height:28px;"></div><div class="t w" style="left:1464px;top:1019px;width:100px;text-align:center;font-size:12px;line-height:14px;color:#fff">Schließen</div></body></html>
